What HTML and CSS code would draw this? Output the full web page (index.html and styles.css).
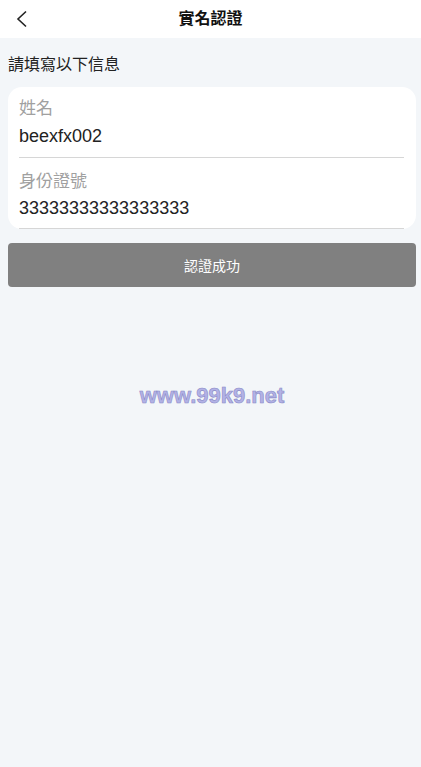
FILE: index.html
```html
<!DOCTYPE html>
<html lang="zh-Hant">
<head>
<meta charset="utf-8">
<meta name="viewport" content="width=device-width, initial-scale=1">
<title>實名認證</title>
<link rel="stylesheet" href="styles.css">
</head>
<body>
<header class="nav">
  <button class="back" aria-label="返回">
    <svg width="20" height="20" viewBox="0 0 20 20"><path d="M14 2.5 L6 10 L14 17.5" fill="none" stroke="#222" stroke-width="1.6" stroke-linejoin="miter"/></svg>
  </button>
  <h1 class="title">實名認證</h1>
</header>
<main class="content">
  <p class="hint">請填寫以下信息</p>
  <section class="card">
    <div class="field">
      <div class="label">姓名</div>
      <div class="value">beexfx002</div>
    </div>
    <div class="field field-second">
      <div class="label">身份證號</div>
      <div class="value">33333333333333333</div>
    </div>
  </section>
  <button class="submit">認證成功</button>
  <div class="watermark">www.99k9.net</div>
</main>
</body>
</html>
```
FILE: styles.css
```css
* { box-sizing: border-box; }
html, body {
  margin: 0;
  padding: 0;
  height: 100%;
}
body {
  background: #f3f6f9;
  font-family: "Liberation Sans", Arial, "Noto Sans CJK TC", sans-serif;
  color: #222;
}
.nav {
  height: 38px;
  background: #fff;
  display: flex;
  align-items: center;
  justify-content: center;
  position: relative;
}
.back {
  position: absolute;
  left: 12px;
  top: 9px;
  width: 20px;
  height: 20px;
  padding: 0;
  border: 0;
  background: none;
  display: flex;
}
.title {
  margin: 0;
  font-size: 16px;
  font-weight: bold;
  color: #111;
  line-height: 38px;
}
.content {
  padding: 0 5px 0 8px;
}
.hint {
  margin: 0;
  padding-top: 16px;
  font-size: 16px;
  line-height: 22px;
  color: #222;
  height: 49px;
}
.card {
  background: #fff;
  border-radius: 14px;
  padding: 0 12px 0 11px;
  height: 142px;
}
.field {
  padding-top: 10px;
  height: 71px;
  border-bottom: 1px solid #d6d6d6;
}
.field-second {
  padding-top: 12px;
}
.field-second .value {
  line-height: 28px;
}
.label {
  font-size: 17px;
  line-height: 24px;
  color: #a0a0a0;
}
.value {
  font-size: 18px;
  line-height: 30px;
  color: #222;
}
.submit {
  display: block;
  width: 100%;
  margin-top: 14px;
  height: 44px;
  border: 0;
  border-radius: 4px;
  background: #808080;
  color: #fff;
  font-family: "Liberation Sans", Arial, "Noto Sans CJK TC", sans-serif;
  font-size: 14px;
}
.watermark {
  margin-top: 96px;
  text-align: center;
  font-size: 22px;
  font-weight: bold;
  color: #b2b2e6;
  -webkit-text-stroke: 0.6px #8a8ac6;
  line-height: 26px;
}
```
